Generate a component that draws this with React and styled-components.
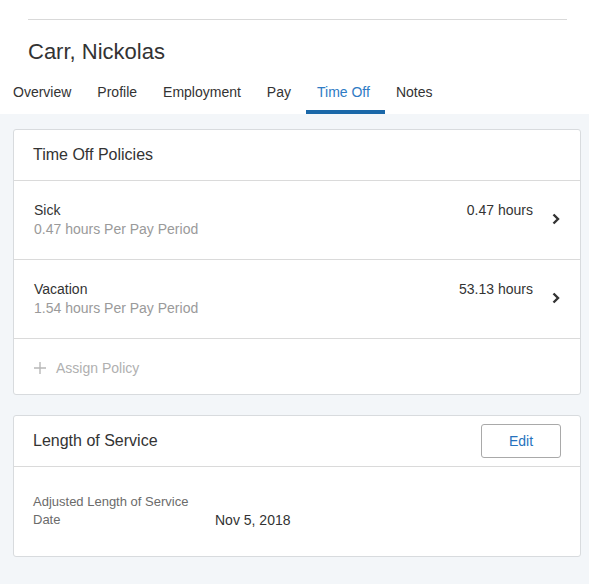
import React from "react";
import styled, { createGlobalStyle } from "styled-components";

const Global = createGlobalStyle`
  html, body { margin: 0; padding: 0; background: #ffffff; }
  body { font-family: "Liberation Sans", Arial, sans-serif; color: #333; }
  * { box-sizing: border-box; }
`;

const Page = styled.div`
  width: 589px;
  min-height: 584px;
  display: flex;
  flex-direction: column;
  background: #f3f6f9;
`;

const Top = styled.div`
  background: #fff;
  padding-top: 19px;
`;

const Rule = styled.div`
  margin: 0 22px 0 28px;
  border-top: 1px solid #d9d9d9;
`;

const Name = styled.h1`
  margin: 18px 0 0 28px;
  font-size: 22px;
  line-height: 28px;
  font-weight: 400;
  color: #333;
`;

const Tabs = styled.nav`
  display: flex;
  margin-top: 4px;
`;

const Tab = styled.div`
  position: relative;
  padding: 12px 13px 12px;
  font-size: 14px;
  line-height: 20px;
  color: ${(p) => (p.$active ? "#2e7bc4" : "#333")};
  &::after {
    content: "";
    position: absolute;
    left: 2px;
    right: -2px;
    bottom: 0;
    height: 4px;
    background: ${(p) => (p.$active ? "#1a67a8" : "transparent")};
  }
`;

const Body = styled.div`
  flex: 1;
  display: flex;
  flex-direction: column;
  gap: 20px;
  padding: 15px 0 20px 13px;
`;

const Card = styled.section`
  width: 568px;
  background: #fff;
  border: 1px solid #d8dbde;
  border-radius: 3px;
`;

const CardHeader = styled.div`
  height: 51px;
  display: flex;
  align-items: center;
  justify-content: space-between;
  padding: 0 19px;
  border-bottom: 1px solid #dadada;
`;

const CardTitle = styled.h2`
  margin: 0;
  font-size: 16px;
  font-weight: 400;
  color: #333;
`;

const EditButton = styled.button`
  width: 80px;
  height: 34px;
  border: 1px solid #a9a9a9;
  border-radius: 3px;
  background: #fff;
  color: #2672bd;
  font-family: "Liberation Sans", Arial, sans-serif;
  font-size: 14px;
`;

const PolicyRow = styled.div`
  display: flex;
  align-items: center;
  padding: 20px;
  border-bottom: 1px solid #dadada;
`;

const PolicyInfo = styled.div`
  flex: 1;
  display: flex;
  flex-direction: column;
`;

const PolicyName = styled.div`
  font-size: 14px;
  line-height: 19px;
  color: #333;
`;

const PolicySub = styled.div`
  font-size: 14px;
  line-height: 19px;
  color: #9a9a9a;
`;

const Hours = styled.div`
  align-self: flex-start;
  font-size: 14px;
  line-height: 19px;
  color: #333;
`;

const Chevron = styled.svg`
  width: 8px;
  height: 12px;
  margin-left: 19px;
  margin-top: -2px;
`;

const AssignRow = styled.div`
  height: 55px;
  display: flex;
  align-items: center;
  gap: 10px;
  padding: 2px 20px 0;
  font-size: 14px;
  color: #b0b0b0;
`;

const Plus = styled.svg`
  width: 12px;
  height: 12px;
`;

const Details = styled.div`
  display: grid;
  grid-template-columns: 170px 1fr;
  column-gap: 12px;
  align-items: end;
  padding: 26px 19px 27px;
`;

const Label = styled.div`
  font-size: 13px;
  line-height: 18px;
  color: #6b6b6b;
`;

const Value = styled.div`
  font-size: 14px;
  line-height: 18px;
  color: #333;
`;

const policies = [
  { name: "Sick", sub: "0.47 hours Per Pay Period", hours: "0.47 hours" },
  { name: "Vacation", sub: "1.54 hours Per Pay Period", hours: "53.13 hours" },
];

const tabs = ["Overview", "Profile", "Employment", "Pay", "Time Off", "Notes"];

export default function App() {
  return (
    <Page>
      <Global />
      <Top>
        <Rule />
        <Name>Carr, Nickolas</Name>
        <Tabs>
          {tabs.map((t) => (
            <Tab key={t} $active={t === "Time Off"}>
              {t}
            </Tab>
          ))}
        </Tabs>
      </Top>
      <Body>
        <Card>
          <CardHeader>
            <CardTitle>Time Off Policies</CardTitle>
          </CardHeader>
          {policies.map((p) => (
            <PolicyRow key={p.name}>
              <PolicyInfo>
                <PolicyName>{p.name}</PolicyName>
                <PolicySub>{p.sub}</PolicySub>
              </PolicyInfo>
              <Hours>{p.hours}</Hours>
              <Chevron viewBox="0 0 8 12">
                <polyline
                  points="1.5,1.5 6,6 1.5,10.5"
                  fill="none"
                  stroke="#333"
                  strokeWidth="2.4"
                />
              </Chevron>
            </PolicyRow>
          ))}
          <AssignRow>
            <Plus viewBox="0 0 12 12">
              <path d="M6 0 V12 M0 6 H12" stroke="#b8b8b8" strokeWidth="1.4" />
            </Plus>
            Assign Policy
          </AssignRow>
        </Card>
        <Card>
          <CardHeader>
            <CardTitle>Length of Service</CardTitle>
            <EditButton>Edit</EditButton>
          </CardHeader>
          <Details>
            <Label>Adjusted Length of Service Date</Label>
            <Value>Nov 5, 2018</Value>
          </Details>
        </Card>
      </Body>
    </Page>
  );
}
